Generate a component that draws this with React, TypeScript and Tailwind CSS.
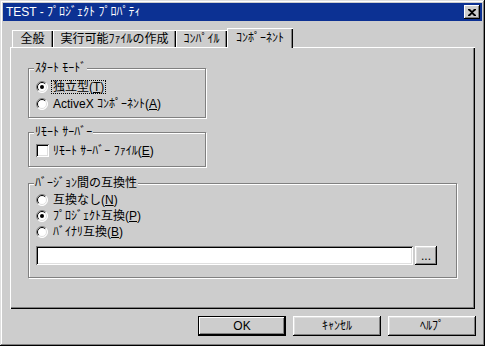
import type { ReactNode } from 'react';

// Win95 風のプロジェクト プロパティ ダイアログ
const font = "font-['Liberation_Sans','Noto_Sans_CJK_JP',sans-serif]";

function Radio({ checked }: { checked?: boolean }) {
  return (
    <svg width="12" height="12" viewBox="0 0 12 12" className="shrink-0">
      <circle cx="6" cy="6" r="5.5" fill="#fff" />
      <path d="M2.1 9.9 A5.5 5.5 0 0 1 9.9 2.1" stroke="#808080" fill="none" />
      <path d="M9.9 2.1 A5.5 5.5 0 0 1 2.1 9.9" stroke="#fff" fill="none" />
      <path d="M2.8 9.2 A4.5 4.5 0 0 1 9.2 2.8" stroke="#000" fill="none" />
      <path d="M9.2 2.8 A4.5 4.5 0 0 1 2.8 9.2" stroke="#dfdfdf" fill="none" />
      {checked && <circle cx="6" cy="6" r="2" fill="#000" />}
    </svg>
  );
}

function Group({ label, className, children }: { label: string; className: string; children: ReactNode }) {
  return (
    <div className={`relative border border-[#808080] shadow-[1px_1px_0_#fff,inset_1px_1px_0_#fff] ${className}`}>
      <span className="absolute -top-[7px] left-[5px] bg-[#cdcdcd] px-[1px] text-[12px] leading-[12px]">
        {label}
      </span>
      {children}
    </div>
  );
}

function Option({ checked, focused, children, h }: { checked?: boolean; focused?: boolean; children: ReactNode; h: string }) {
  return (
    <div className={`flex items-center gap-[3px] ${h}`}>
      <Radio checked={checked} />
      <span
        className={`border px-[1px] text-[12px] leading-[12px] ${focused ? 'border-dotted border-black' : 'border-transparent'}`}
      >
        {children}
      </span>
    </div>
  );
}

function Tab({ label, w, selected }: { label: string; w: string; selected?: boolean }) {
  return (
    <div
      className={`${w} flex items-start justify-center bg-[#cdcdcd] text-[12px] leading-[12px] ${
        selected
          ? 'relative z-10 h-[20px] -mb-px pt-[4px] shadow-[inset_1px_1px_0_#fff,inset_-1px_0_0_#000,inset_-2px_0_0_#808080]'
          : 'h-[17px] pt-[3px] shadow-[inset_1px_1px_0_#fff,inset_-1px_0_0_#000,inset_-2px_0_0_#808080]'
      }`}
    >
      {label}
    </div>
  );
}

function Button({ children, isDefault }: { children: ReactNode; isDefault?: boolean }) {
  return (
    <div
      className={`flex h-[20px] w-[88px] items-center justify-center text-[12px] leading-[12px] ${
        isDefault
          ? 'border border-black shadow-[inset_-1px_-1px_0_#000,inset_1px_1px_0_#fff,inset_-2px_-2px_0_#808080]'
          : 'shadow-[inset_-1px_-1px_0_#000,inset_1px_1px_0_#fff,inset_-2px_-2px_0_#808080,inset_2px_2px_0_#dfdfdf]'
      }`}
    >
      {children}
    </div>
  );
}

export default function App() {
  return (
    <div
      className={`${font} flex h-[346px] w-[485px] flex-col bg-[#cdcdcd] p-[3px] text-black shadow-[inset_-1px_-1px_0_#000,inset_1px_1px_0_#dfdfdf,inset_-2px_-2px_0_#808080,inset_2px_2px_0_#fff]`}
    >
      {/* タイトルバー */}
      <div className="flex h-[18px] items-center justify-between bg-[#0c3193] pl-[3px] pr-[2px]">
        <span className="text-[12px] leading-[12px] text-white">TEST - ﾌﾟﾛｼﾞｪｸﾄ ﾌﾟﾛﾊﾟﾃｨ</span>
        <div className="flex h-[14px] w-[16px] items-center justify-center bg-[#cdcdcd] shadow-[inset_-1px_-1px_0_#000,inset_1px_1px_0_#fff,inset_-2px_-2px_0_#808080]">
          <svg width="8" height="7" viewBox="0 0 8 7">
            <path d="M0 0h2l2 2 2-2h2v1L5 3.5 8 6v1H6L4 5 2 7H0V6l3-2.5L0 1z" fill="#000" />
          </svg>
        </div>
      </div>

      <div className="flex flex-1 flex-col px-[7px] pt-[7px]">
        {/* タブ */}
        <div className="flex h-[19px] items-end pl-[2px]">
          <Tab label="全般" w="w-[41px]" />
          <Tab label="実行可能ﾌｧｲﾙの作成" w="w-[123px]" />
          <Tab label="ｺﾝﾊﾟｲﾙ" w="w-[51px]" />
          <Tab label="ｺﾝﾎﾟｰﾈﾝﾄ" w="w-[66px]" selected />
        </div>

        {/* パネル本体 */}
        <div className="h-[262px] w-[465px] pl-[18px] shadow-[inset_1px_1px_0_#fff,inset_-1px_-1px_0_#000,inset_-2px_-2px_0_#808080]">
          <Group label="ｽﾀｰﾄ ﾓｰﾄﾞ" className="mt-[21px] h-[50px] w-[178px] pl-[7px] pt-[9px]">
            <Option checked focused h="h-[17px]">
              独立型(<span className="underline">T</span>)
            </Option>
            <Option h="h-[17px]">
              ActiveX ｺﾝﾎﾟｰﾈﾝﾄ(<span className="underline">A</span>)
            </Option>
          </Group>

          <Group label="ﾘﾓｰﾄ ｻｰﾊﾞｰ" className="mt-[14px] h-[35px] w-[178px] pl-[7px] pt-[9px]">
            <div className="flex h-[17px] items-center gap-[4px]">
              <div className="h-[13px] w-[13px] shrink-0 bg-white shadow-[inset_1px_1px_0_#808080,inset_-1px_-1px_0_#fff,inset_2px_2px_0_#000,inset_-2px_-2px_0_#dfdfdf]" />
              <span className="text-[12px] leading-[12px]">
                ﾘﾓｰﾄ ｻｰﾊﾞｰ ﾌｧｲﾙ(<span className="underline">E</span>)
              </span>
            </div>
          </Group>

          <Group label="ﾊﾞｰｼﾞｮﾝ間の互換性" className="mt-[16px] h-[95px] w-[429px] pl-[7px] pt-[8px]">
            <Option h="h-[16px]">
              互換なし(<span className="underline">N</span>)
            </Option>
            <Option checked h="h-[16px]">
              ﾌﾟﾛｼﾞｪｸﾄ互換(<span className="underline">P</span>)
            </Option>
            <Option h="h-[16px]">
              ﾊﾞｲﾅﾘ互換(<span className="underline">B</span>)
            </Option>
            <div className="mt-[6px] flex items-center gap-[2px]">
              <div className="h-[19px] w-[377px] bg-white shadow-[inset_1px_1px_0_#808080,inset_-1px_-1px_0_#fff,inset_2px_2px_0_#000,inset_-2px_-2px_0_#dfdfdf]" />
              <div className="flex h-[19px] w-[22px] items-center justify-center text-[12px] leading-[12px] shadow-[inset_-1px_-1px_0_#000,inset_1px_1px_0_#fff,inset_-2px_-2px_0_#808080,inset_2px_2px_0_#dfdfdf]">
                ...
              </div>
            </div>
          </Group>
        </div>

        {/* ボタン */}
        <div className="mr-[-1px] mt-[7px] flex justify-end gap-[7px]">
          <Button isDefault>OK</Button>
          <Button>ｷｬﾝｾﾙ</Button>
          <Button>ﾍﾙﾌﾟ</Button>
        </div>
      </div>
    </div>
  );
}
